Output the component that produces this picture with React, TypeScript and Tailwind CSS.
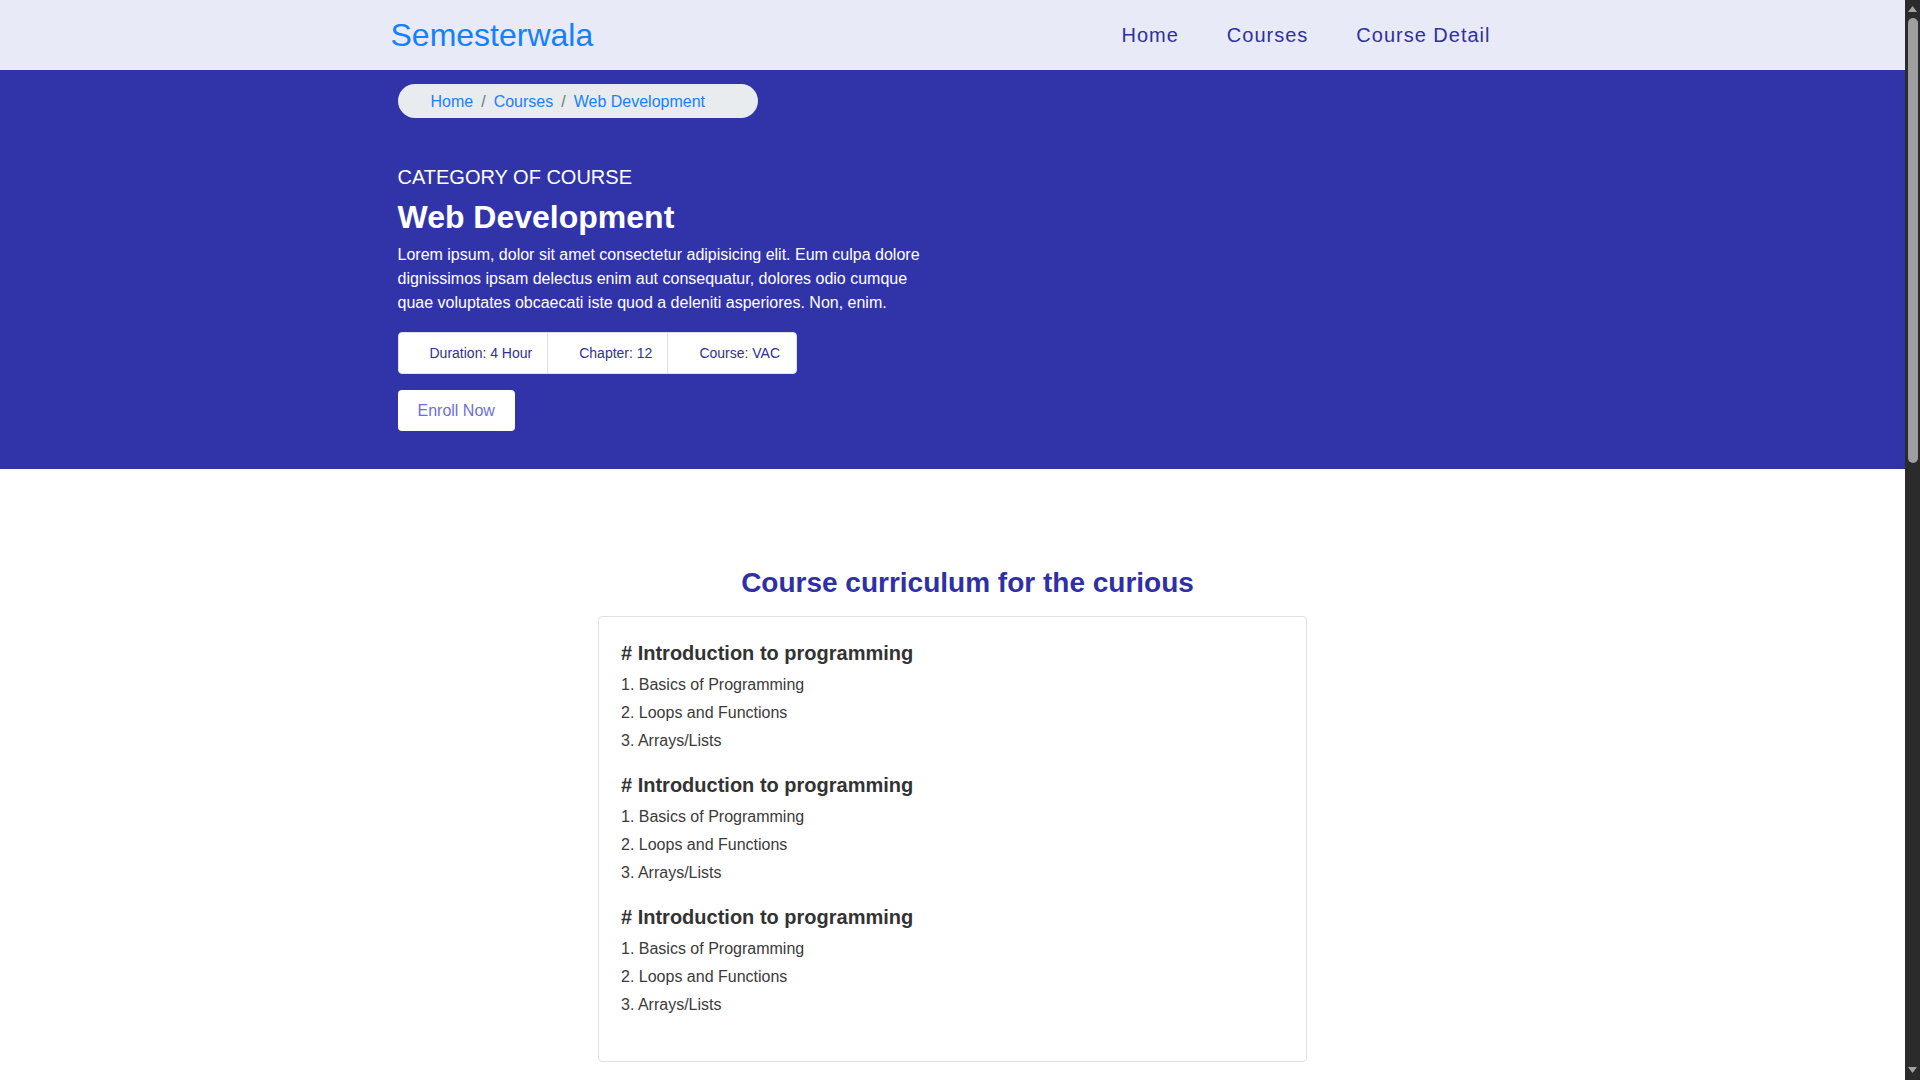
import React from "react";

const font = { fontFamily: '"Liberation Sans", Arial, sans-serif' };

function Section() {
  return (
    <div className="mb-[18px]">
      <h3 className="text-[20px] leading-[24px] font-bold text-[#333333]"># Introduction to programming</h3>
      <ol className="mt-[6px] text-[16px] leading-[28px] text-[#3a3a3a]">
        <li>1. Basics of Programming</li>
        <li>2. Loops and Functions</li>
        <li>3. Arrays/Lists</li>
      </ol>
    </div>
  );
}

function Scrollbar() {
  return (
    <div className="flex h-full w-[15px] shrink-0 flex-col items-center bg-[#2b2b2b]">
      <svg width="9" height="6" viewBox="0 0 9 6" className="mt-[6px]">
        <path d="M4.5 0 L9 6 L0 6 Z" fill="#a3a3a3" />
      </svg>
      <div className="mt-[6px] h-[445px] w-[10px] rounded-full bg-[#9f9f9f]" />
      <div className="flex-1" />
      <svg width="9" height="6" viewBox="0 0 9 6" className="mb-[7px]">
        <path d="M0 0 L9 0 L4.5 6 Z" fill="#a3a3a3" />
      </svg>
    </div>
  );
}

export default function App() {
  return (
    <div style={font} className="flex h-screen overflow-hidden bg-white">
      <div className="h-full flex-1 overflow-hidden">
        <nav className="h-[70px] bg-[#e8eaf8]">
          <div className="mx-auto flex h-full w-[1140px] items-center justify-between pl-[8px] pr-[8px]">
            <a className="text-[32px] leading-[38px] text-[#1580fb]">Semesterwala</a>
            <ul className="flex items-center">
              <li className="px-6 text-[20px] tracking-[1px] text-[#2e309e]">Home</li>
              <li className="px-6 text-[20px] tracking-[1px] text-[#2e309e]">Courses</li>
              <li className="px-6 text-[20px] tracking-[1px] text-[#2e309e]">Course Detail</li>
            </ul>
          </div>
        </nav>

        <header className="bg-[#3134a9] pt-[14px] pb-[38px]">
          <div className="mx-auto w-[1140px] px-[15px]">
            <div className="flex h-[34px] w-[360px] items-center rounded-full bg-[#e9ecef] pl-[33px] pt-[1px] text-[16px] text-[#1a7efb]">
              <span>Home</span>
              <span className="px-2 text-[#6c757d]">/</span>
              <span>Courses</span>
              <span className="px-2 text-[#6c757d]">/</span>
              <span>Web Development</span>
            </div>

            <p className="mt-[47px] text-[20px] leading-[24px] text-white">CATEGORY OF COURSE</p>
            <h1 className="mt-[9px] text-[32px] leading-[38px] font-bold text-white">Web Development</h1>
            <p className="mt-[7px] w-[546px] text-[16px] leading-[24px] text-white">
              Lorem ipsum, dolor sit amet consectetur adipisicing elit. Eum culpa dolore dignissimos ipsam delectus enim aut consequatur, dolores odio cumque quae voluptates obcaecati iste quod a deleniti asperiores. Non, enim.
            </p>

            <div className="mt-[17px] flex h-[42px] w-max rounded-[4px] border border-[#dee2e6] bg-white text-[14px] text-[#2f3193]">
              <div className="flex items-center pl-[31px] pr-[15px]">Duration: 4 Hour</div>
              <div className="flex items-center border-l border-[#dee2e6] pl-[31px] pr-[15px]">Chapter: 12</div>
              <div className="flex items-center border-l border-[#dee2e6] pl-[31px] pr-[16px]">Course: VAC</div>
            </div>

            <button className="mt-4 flex h-[41px] items-center rounded-[4px] bg-white px-5 text-[16px] text-[#6e6fdc]">
              Enroll Now
            </button>
          </div>
        </header>

        <main className="pt-[97px]">
          <h2 className="pl-[30px] text-center text-[28px] leading-[34px] font-bold text-[#2f30a6]">
            Course curriculum for the curious
          </h2>
          <div className="mx-auto mt-[16px] w-[709px] rounded-[4px] border border-[#dee2e6] px-[22px] pt-[24px] pb-[24px]">
            <Section />
            <Section />
            <Section />
          </div>
          <div className="h-[1490px]" />
        </main>
      </div>
      <Scrollbar />
    </div>
  );
}
